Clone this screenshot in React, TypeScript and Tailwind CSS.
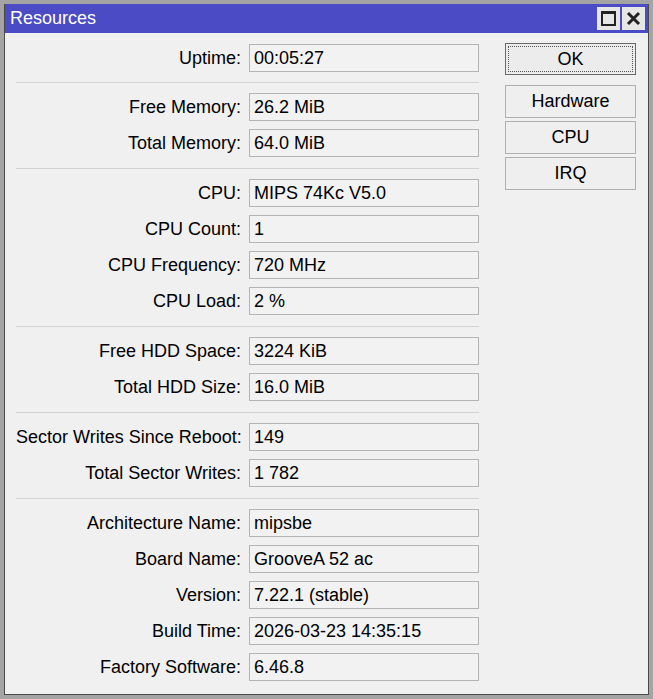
const groups: [string, string][][] = [
  [["Uptime:", "00:05:27"]],
  [
    ["Free Memory:", "26.2 MiB"],
    ["Total Memory:", "64.0 MiB"],
  ],
  [
    ["CPU:", "MIPS 74Kc V5.0"],
    ["CPU Count:", "1"],
    ["CPU Frequency:", "720 MHz"],
    ["CPU Load:", "2 %"],
  ],
  [
    ["Free HDD Space:", "3224 KiB"],
    ["Total HDD Size:", "16.0 MiB"],
  ],
  [
    ["Sector Writes Since Reboot:", "149"],
    ["Total Sector Writes:", "1 782"],
  ],
  [
    ["Architecture Name:", "mipsbe"],
    ["Board Name:", "GrooveA 52 ac"],
    ["Version:", "7.22.1 (stable)"],
    ["Build Time:", "2026-03-23 14:35:15"],
    ["Factory Software:", "6.46.8"],
  ],
];

function Row({ label, value }: { label: string; value: string }) {
  return (
    <div className="flex items-center gap-[8px]">
      <div className="w-[225px] whitespace-nowrap text-right">{label}</div>
      <div className="h-[28px] w-[230px] border border-[#b4b4b4] bg-[#f2f2f2] px-[4px] leading-[26px]">
        {value}
      </div>
    </div>
  );
}

export default function App() {
  return (
    <div
      className="h-[699px] w-[653px] bg-[#a4a4a4] pt-[4px] pl-[4px] pr-[4px] pb-[4px] text-[18px] text-black"
      style={{ fontFamily: '"Liberation Sans", Arial, sans-serif' }}
    >
      <div className="flex h-full flex-col border border-[#4a4a4a] border-t-0 bg-[#f0f0f0]">
        {/* Title bar */}
        <div className="flex h-[29px] items-center justify-between bg-[#4b4bc6] pl-[5px] pr-[3px]">
          <span className="text-[18px] text-white">Resources</span>
          <div className="flex gap-[2px]">
            <div className="flex h-[23px] w-[23px] items-center justify-center bg-[#e6e6e6]">
              <div className="h-[15px] w-[15px] border-2 border-t-[3px] border-[#222]" />
            </div>
            <div className="flex h-[23px] w-[23px] items-center justify-center bg-[#e6e6e6]">
              <svg width="15" height="15" viewBox="0 0 15 15">
                <path d="M2 2 L13 13 M13 2 L2 13" stroke="#222" strokeWidth="3" />
              </svg>
            </div>
          </div>
        </div>

        {/* Body */}
        <div className="flex flex-1 pt-[10px] pl-[11px]">
          <div className="flex flex-col pt-[1px]">
            {groups.map((g, gi) => (
              <div key={gi} className="flex flex-col">
                {gi === 1 && <div className="mt-[10px] mb-[10px] h-px w-[463px] bg-[#d3d3d3]" />}
                {gi > 1 && <div className="mt-[11px] mb-[10px] h-px w-[463px] bg-[#d3d3d3]" />}
                <div className="flex flex-col gap-[8px]">
                  {g.map(([l, v]) => (
                    <Row key={l} label={l} value={v} />
                  ))}
                </div>
              </div>
            ))}
          </div>

          <div className="ml-[26px] flex w-[131px] flex-col gap-[3px]">
            <div className="mb-[7px] h-[32px] border border-[#6a6a6a] bg-[#ececec] p-[2px]">
              <div className="flex h-full items-center justify-center border border-dotted border-[#555]">
                OK
              </div>
            </div>
            {["Hardware", "CPU", "IRQ"].map((b) => (
              <div
                key={b}
                className="flex h-[33px] items-center justify-center border border-[#b0b0b0] bg-[#efefef]"
              >
                {b}
              </div>
            ))}
          </div>
        </div>
      </div>
    </div>
  );
}
